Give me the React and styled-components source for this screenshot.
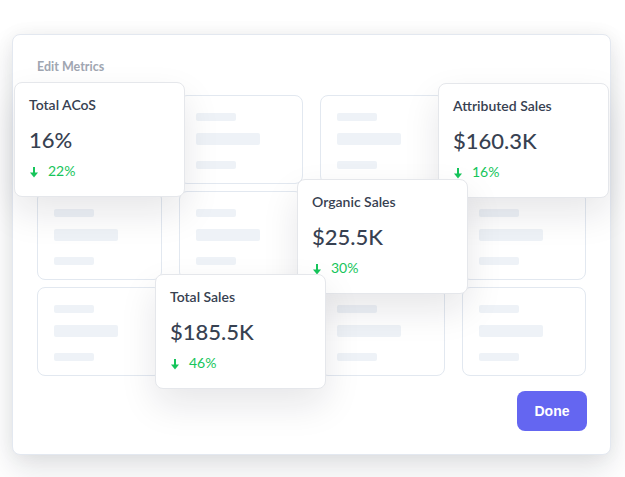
import React from "react";
import styled, { createGlobalStyle } from "styled-components";

const GlobalStyle = createGlobalStyle`
  html, body {
    margin: 0;
    min-height: 100%;
    background: #ffffff;
    font-family: "Lato", "Noto Sans", sans-serif;
  }
`;

const metrics = [
  { title: "Total ACoS", value: "16%", change: "22%", left: 1, top: 47 },
  { title: "Attributed Sales", value: "$160.3K", change: "16%", left: 425, top: 48 },
  { title: "Organic Sales", value: "$25.5K", change: "30%", left: 284, top: 144 },
  { title: "Total Sales", value: "$185.5K", change: "46%", left: 142, top: 239 },
];

function ArrowDown() {
  return (
    <svg width="8" height="11" viewBox="0 0 8 11">
      <rect x="3" y="0" width="2" height="6" fill="#16c55b" />
      <path d="M0 5.5 L8 5.5 L4 10.5 Z" fill="#16c55b" />
    </svg>
  );
}

export default function App() {
  const slots = Array.from({ length: 12 });

  return (
    <>
      <GlobalStyle />
      <Page>
        <Panel>
          <Heading>Edit Metrics</Heading>
          <Grid>
            {slots.map((_, i) => (
              <Slot key={i}>
                <Bar $w={40} $h={8} />
                <Bar $w={64} $h={12} />
                <Bar $w={40} $h={8} />
              </Slot>
            ))}
          </Grid>
          <Footer>
            <DoneButton>Done</DoneButton>
          </Footer>

          {metrics.map((m) => (
            <MetricCard key={m.title} $left={m.left} $top={m.top}>
              <Title>{m.title}</Title>
              <Value>{m.value}</Value>
              <Change>
                <ArrowDown />
                {m.change}
              </Change>
            </MetricCard>
          ))}
        </Panel>
      </Page>
    </>
  );
}

const Page = styled.div`
  height: 477px;
  padding: 34px 0 0 12px;
  box-sizing: border-box;
  overflow: hidden;
`;

const Panel = styled.div`
  position: relative;
  box-sizing: border-box;
  width: 599px;
  padding: 24px 24px 23px;
  background: #ffffff;
  border: 1px solid #e3e8f0;
  border-radius: 8px;
  box-shadow: 0 14px 30px rgba(17, 24, 39, 0.12), 0 0 18px rgba(17, 24, 39, 0.05);
`;

const Heading = styled.div`
  font-size: 12.5px;
  line-height: 16px;
  font-weight: 700;
  color: #a0a6b1;
  margin-bottom: 20px;
`;

const Grid = styled.div`
  display: grid;
  grid-template-columns: repeat(4, 1fr);
  grid-auto-rows: 89px;
  column-gap: 17px;
  row-gap: 7px;
`;

const Slot = styled.div`
  box-sizing: border-box;
  border: 1px solid #e2e8f0;
  border-radius: 8px;
  padding: 17px 16px 0;
  display: flex;
  flex-direction: column;
  align-items: flex-start;
  gap: 12px;

  & > :nth-child(3) {
    margin-top: 4px;
  }
`;

const Bar = styled.div`
  width: ${(p) => p.$w}px;
  height: ${(p) => p.$h}px;
  border-radius: 2px;
  background: #eef2f7;
`;

const Footer = styled.div`
  display: flex;
  justify-content: flex-end;
  margin-top: 15px;
`;

const DoneButton = styled.button`
  width: 70px;
  height: 40px;
  margin-right: -1px;
  border: none;
  border-radius: 8px;
  background: #6466f1;
  color: #ffffff;
  font-family: "Liberation Sans", Arial, sans-serif;
  font-size: 14px;
  font-weight: 700;
  cursor: pointer;
`;

const MetricCard = styled.div`
  position: absolute;
  left: ${(p) => p.$left}px;
  top: ${(p) => p.$top}px;
  box-sizing: border-box;
  width: 171px;
  height: 115px;
  padding: 13px 14px 0;
  background: #ffffff;
  border: 1px solid #e5e7eb;
  border-radius: 8px;
  box-shadow: 0 16px 36px rgba(15, 23, 42, 0.1);
`;

const Title = styled.div`
  font-size: 14px;
  line-height: 18px;
  font-weight: 600;
  color: #374151;
`;

const Value = styled.div`
  margin-top: 12px;
  font-size: 22px;
  line-height: 28px;
  font-weight: 500;
  color: #374151;
`;

const Change = styled.div`
  margin-top: 8px;
  display: flex;
  align-items: center;
  gap: 10px;
  padding-left: 1px;
  font-size: 14px;
  line-height: 18px;
  color: #16c55b;

  svg {
    margin-top: 2px;
  }
`;
